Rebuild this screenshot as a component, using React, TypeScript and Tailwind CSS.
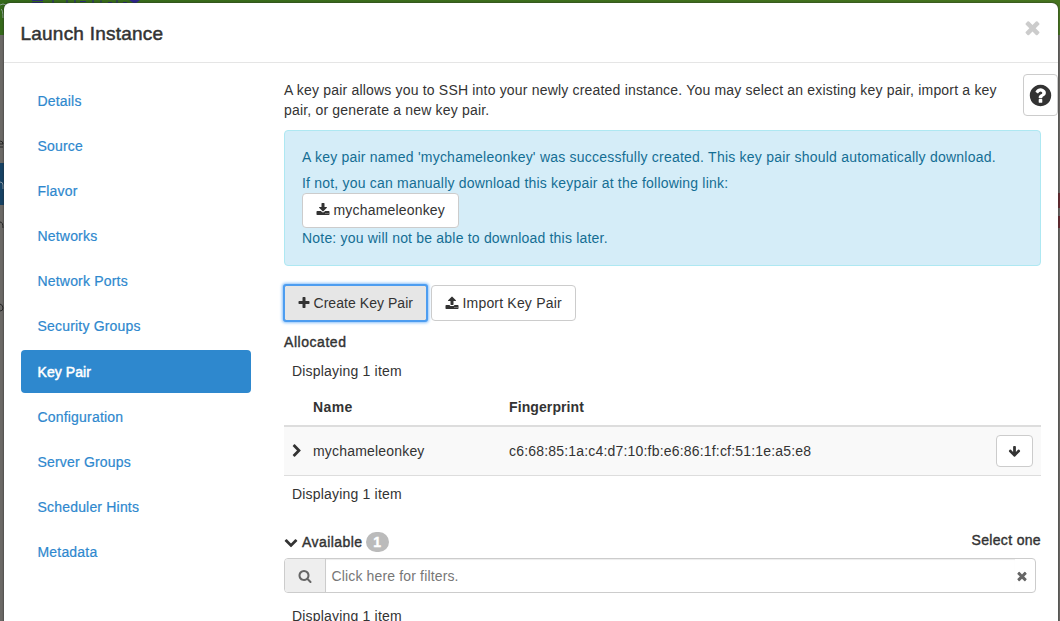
import React from "react";

const icons = {
  download: "M1344 1344q0-26-19-45t-45-19-45 19-19 45 19 45 45 19 45-19 19-45zm256 0q0-26-19-45t-45-19-45 19-19 45 19 45 45 19 45-19 19-45zm128-224v320q0 40-28 68t-68 28h-1472q-40 0-68-28t-28-68v-320q0-40 28-68t68-28h465l135 136q58 56 136 56t136-56l136-136h464q40 0 68 28t28 68zm-325-569q17 41-14 70l-448 448q-18 19-45 19t-45-19l-448-448q-31-29-14-70 17-39 59-39h256v-448q0-26 19-45t45-19h256q26 0 45 19t19 45v448h256q42 0 59 39z",
  upload: "M1344 1472q0-26-19-45t-45-19-45 19-19 45 19 45 45 19 45-19 19-45zm256 0q0-26-19-45t-45-19-45 19-19 45 19 45 45 19 45-19 19-45zm128-224v320q0 40-28 68t-68 28h-1472q-40 0-68-28t-28-68v-320q0-40 28-68t68-28h427q21 56 70.5 92t110.5 36h256q61 0 110.5-36t70.5-92h427q40 0 68 28t28 68zm-325-648q-17 40-59 40h-256v448q0 26-19 45t-45 19h-256q-26 0-45-19t-19-45v-448h-256q-42 0-59-40-17-39 14-69l448-448q18-19 45-19t45 19l448 448q31 30 14 69z",
  plus: "M1600 736v192q0 40-28 68t-68 28h-416v416q0 40-28 68t-68 28h-192q-40 0-68-28t-28-68v-416h-416q-40 0-68-28t-28-68v-192q0-40 28-68t68-28h416v-416q0-40 28-68t68-28h192q40 0 68 28t28 68v416h416q40 0 68 28t28 68z",
  question: "M1024 1376v-192q0-14-9-23t-23-9h-192q-14 0-23 9t-9 23v192q0 14 9 23t23 9h192q14 0 23-9t9-23zm256-672q0-88-55.5-163t-138.5-116-170-41q-243 0-371 213-15 24 8 42l132 100q7 6 19 6 16 0 25-12 53-68 86-92 34-24 86-24 48 0 85.5 26t37.5 59q0 38-20 61t-68 45q-63 28-115.5 86.5t-52.5 125.5v36q0 14 9 23t23 9h192q14 0 23-9t9-23q0-19 21.5-49.5t54.5-49.5q32-18 49-28.5t46-35 44.5-48 28-60.5 12.5-81zm384 192q0 209-103 385.5t-279.5 279.5-385.5 103-385.5-103-279.5-279.5-103-385.5 103-385.5 279.5-279.5 385.5-103 385.5 103 279.5 279.5 103 385.5z",
  times: "M1490 1322q0 40-28 68l-136 136q-28 28-68 28t-68-28l-294-294-294 294q-28 28-68 28t-68-28l-136-136q-28-28-28-68t28-68l294-294-294-294q-28-28-28-68t28-68l136-136q28-28 68-28t68 28l294 294 294-294q28-28 68-28t68 28l136 136q28 28 28 68t-28 68l-294 294 294 294q28 28 28 68z",
  search: "M1216 832q0-185-131.5-316.5t-316.5-131.5-316.5 131.5-131.5 316.5 131.5 316.5 316.5 131.5 316.5-131.5 131.5-316.5zm512 832q0 52-38 90t-90 38q-54 0-90-38l-343-342q-179 124-399 124-143 0-273.5-55.5t-225-150-150-225-55.5-273.5 55.5-273.5 150-225 225-150 273.5-55.5 273.5 55.5 225 150 150 225 55.5 273.5q0 220-124 399l343 343q37 37 37 90z",
  arrowDown: "M1675 832q0 53-37 90l-651 652q-39 37-91 37-53 0-90-37l-651-652q-38-36-38-90 0-53 38-91l74-75q39-37 91-37 53 0 90 37l294 294v-704q0-52 38-90t90-38h128q52 0 90 38t38 90v704l294-294q37-37 90-37 52 0 91 37l75 75q37 39 37 91z",
  chevronRight: "M1363 877l-742 742q-19 19-45 19t-45-19l-166-166q-19-19-19-45t19-45l531-531-531-531q-19-19-19-45t19-45l166-166q19-19 45-19t45 19l742 742q19 19 19 45t-19 45z",
  chevronDown: "M1683 808l-742 741q-19 19-45 19t-45-19l-742-741q-19-19-19-45.5t19-45.5l166-165q19-19 45-19t45 19l531 531 531-531q19-19 45-19t45 19l166 165q19 19 19 45.5t-19 45.5z",
};

function Icon({ name, className = "size-3.5" }: { name: keyof typeof icons; className?: string }) {
  return (
    <svg viewBox="0 0 1792 1792" fill="currentColor" aria-hidden="true" className={`shrink-0 overflow-visible ${className}`}>
      <path d={icons[name]} />
    </svg>
  );
}

const steps = ["Details", "Source", "Flavor", "Networks", "Network Ports", "Security Groups", "Key Pair", "Configuration", "Server Groups", "Scheduler Hints", "Metadata"];

// The dimmed page whose edges show around the dialog.
function Backdrop() {
  return (
    <div aria-hidden="true" className="absolute inset-0 bg-[#6b6966]">
      <div className="h-[35px] bg-linear-to-r from-[#35691a] to-[#46741f]" />
      <svg viewBox="0 0 1060 621" className="absolute inset-0 size-full">
        <path d="M0 5q3-2 6 0v4M1 9q2 1 2 9" fill="none" stroke="#8ea394" strokeWidth="1" />
        <path d="M32 2.5h11M32 .5h11M53 0v3M67 0v3M75 0v3M80 1.5h6M93 0v3M101 .5v2M108 2.5h4M117 0v3M123 2.5h4" fill="none" stroke="#2b2a78" strokeWidth="1.2" />
        <path d="M129 0h11l-5 4z" fill="#2f2587" />
        <path d="M0 163h4v42H0z" fill="#174264" />
        <path d="M0 141q3 0 3 3H0M0 147h3M0 304q3 1 3 4t-3 3M0 222q3 0 3 6" fill="none" stroke="#252525" />
        <path d="M0 182q3 0 3 3v4" fill="none" stroke="#8494a0" />
        <path d="M1058 193h2v15h-2zM1058 216h2v12h-2z" fill="#682c32" />
      </svg>
    </div>
  );
}

export default function App() {
  return (
    <div className="relative h-[621px] w-[1060px] overflow-hidden pl-1 pt-[3px] font-['Liberation_Sans',Arial,sans-serif] text-sm leading-5 tracking-[0.187px] text-[#333]">
      <Backdrop />
      <div className="relative h-[640px] w-[1054px] rounded-md bg-white shadow-[0_0_2px_#222]">
        <header className="flex h-[60px] justify-between border-b border-[#e5e5e5] pl-[16.5px] pr-[15px] pt-[19px]">
          <h1 className="whitespace-nowrap text-[19px] leading-6 tracking-[0.22px] [-webkit-text-stroke:0.5px]">Launch Instance</h1>
          <button className="-mt-[5px] h-[21px] text-[#ccc]"><Icon name="times" className="size-[21px]" /></button>
        </header>
        <div className="flex">
          <nav className="ml-[17px] mt-[16px] flex w-[230px] flex-col gap-[2px]">
            {steps.map((s) => (
              <a key={s} className={s === "Key Pair" ? "mt-px flex h-[43px] items-center rounded bg-[#2e88ce] pl-[16.5px] tracking-[0.08px] text-white [-webkit-text-stroke:0.5px]" : "flex h-[43px] items-center pl-[16.5px] text-[#2e88ce] [-webkit-text-stroke:0.2px]"}>{s}</a>
            ))}
          </nav>
          <main className="ml-[33px] w-[757px] shrink-0 pt-[17px]">
            <p className="whitespace-nowrap">A key pair allows you to SSH into your newly created instance. You may select an existing key pair, import a key<br />pair, or generate a new key pair.</p>
            <section className="mt-[10px] h-[136px] rounded border border-[#aee8f2] bg-[#d5edf8] pl-[17px] pt-4 tracking-[0.225px] text-[#146e94]">
              <p className="whitespace-nowrap">A key pair named 'mychameleonkey' was successfully created. This key pair should automatically download.</p>
              <p className="mt-[6px] tracking-[0.2px]">If not, you can manually download this keypair at the following link:</p>
              <button className="flex h-[35px] w-[157px] items-center rounded border border-[#ccc] bg-white pb-px pl-[13px] tracking-[0.18px] text-[#333]"><Icon name="download" /><span className="ml-[3.5px]">mychameleonkey</span></button>
              <p className="tracking-[0.2px]">Note: you will not be able to download this later.</p>
            </section>
            <div className="mt-[19px] flex gap-[4px]">
              <button className="flex h-9 w-[143px] items-center gap-[3px] whitespace-nowrap rounded-[2px] border border-[#8c8c8c] bg-[#e6e6e6] pl-[11.5px] tracking-[0.05px] outline-2 -outline-offset-1 outline-[#4d9df0] shadow-[0_0_3px_2px_#8cc2fa]"><Icon name="plus" />Create Key Pair</button>
              <button className="flex h-9 w-[145px] items-center gap-[3.5px] whitespace-nowrap rounded border border-[#ccc] pl-[13px]"><Icon name="upload" />Import Key Pair</button>
            </div>
            <h2 className="mt-[11px] tracking-[0.55px] [-webkit-text-stroke:0.4px]">Allocated</h2>
            <p className="mt-[9px] pl-2">Displaying 1 item</p>
            <div className="grid h-[46px] grid-cols-[29px_196px_1fr] border-b-2 border-[#ddd] pt-4 font-bold"><span /><span className="tracking-[0.4px]">Name</span><span className="tracking-[0.1px]">Fingerprint</span></div>
            <div className="grid h-[49px] grid-cols-[29px_196px_1fr_45px] items-center border-b border-[#ddd] bg-[#f9f9f9]">
              <Icon name="chevronRight" className="ml-[6px] size-3.5" />
              <span>mychameleonkey</span><span>c6:68:85:1a:c4:d7:10:fb:e6:86:1f:cf:51:1e:a5:e8</span>
              <button className="flex h-8 w-[37px] items-center justify-center rounded border border-[#ccc] bg-white pr-px"><Icon name="arrowDown" className="size-[13px]" /></button>
            </div>
            <p className="mt-[8px] pl-2">Displaying 1 item</p>
            <div className="mt-[26px] flex h-7 items-start justify-between">
              <div className="mt-[2px] flex items-center [-webkit-text-stroke:0.4px]"><Icon name="chevronDown" /><span className="ml-1 tracking-[0.45px]">Available</span><span className="ml-[3px] flex h-5 w-[23px] items-center justify-center rounded-full bg-[#bbb] font-bold text-white">1</span></div>
              <span className="tracking-[0.33px] [-webkit-text-stroke:0.4px]">Select one</span>
            </div>
            <div className="flex h-[35px] w-[752px] overflow-hidden rounded border border-[#ccc]">
              <span className="flex w-[41px] items-center justify-center border-r border-[#ccc] bg-[#eee] text-[#666]"><Icon name="search" /></span>
              <span className="flex flex-1 items-center pl-[5.5px] tracking-[0.15px] text-[#777] shadow-[inset_0_1px_1px_#00000013]">Click here for filters.</span>
              <span className="flex items-center pr-[6px] text-[#666]"><Icon name="times" /></span>
            </div>
            <p className="mt-[13px] pl-2">Displaying 1 item</p>
          </main>
        </div>
        <button className="absolute right-0 top-[71px] flex h-[42px] w-[35px] items-center justify-center rounded border border-[#ccc]"><Icon name="question" className="size-[25px]" /></button>
      </div>
    </div>
  );
}
